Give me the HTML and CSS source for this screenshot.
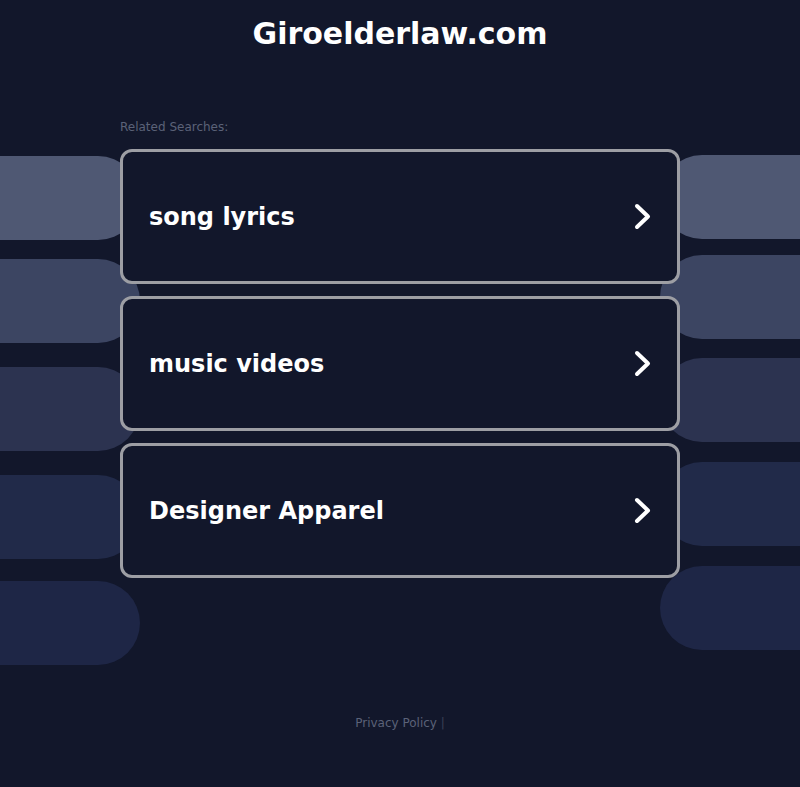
FILE: index.html
```html
<!DOCTYPE html>
<html>
<head>
<meta charset="utf-8">
<link rel="stylesheet" href="styles.css">
</head>
<body>
<div class="deco">
  <div class="pill l p1"></div><div class="pill l p2"></div><div class="pill l p3"></div><div class="pill l p4"></div><div class="pill l p5"></div>
  <div class="pill r p1 r1"></div><div class="pill r p2 r2"></div><div class="pill r p3 r3"></div><div class="pill r p4 r4"></div><div class="pill r p5 r5"></div>
</div>
<header class="header"><h1 class="title">Giroelderlaw.com</h1></header>
<main class="main">
  <div class="label">Related Searches:</div>
  <a class="card" href="#"><span class="card-text">song lyrics</span><svg class="chev" width="20" height="30" viewBox="0 0 20 30"><path d="M4 4 L15 14.5 L4 25" fill="none" stroke="#fff" stroke-width="4" stroke-linecap="round" stroke-linejoin="round"/></svg></a>
  <a class="card" href="#"><span class="card-text">music videos</span><svg class="chev" width="20" height="30" viewBox="0 0 20 30"><path d="M4 4 L15 14.5 L4 25" fill="none" stroke="#fff" stroke-width="4" stroke-linecap="round" stroke-linejoin="round"/></svg></a>
  <a class="card" href="#"><span class="card-text">Designer Apparel</span><svg class="chev" width="20" height="30" viewBox="0 0 20 30"><path d="M4 4 L15 14.5 L4 25" fill="none" stroke="#fff" stroke-width="4" stroke-linecap="round" stroke-linejoin="round"/></svg></a>
</main>
<footer class="footer"><span class="privacy">Privacy Policy</span> <span class="sep">|</span></footer>
</body>
</html>
```

FILE: styles.css
```css
html, body {
  margin: 0;
  padding: 0;
}
body {
  background: #12172b;
  font-family: "DejaVu Sans", sans-serif;
  width: 800px;
  height: 787px;
  position: relative;
  overflow: hidden;
}
.deco {
  position: absolute;
  inset: 0;
  z-index: 0;
  overflow: hidden;
}
.pill {
  position: absolute;
  height: 84px;
  width: 300px;
  border-radius: 42px;
}
.pill.l { left: -160px; }
.pill.r { left: 660px; }
.p1 { background: #4f5873; }
.p2 { background: #3c4562; }
.p3 { background: #2c3350; }
.p4 { background: #212a49; }
.p5 { background: #1e2646; }
.l.p1 { top: 156px; }
.l.p2 { top: 259px; }
.l.p3 { top: 367px; }
.l.p4 { top: 475px; }
.l.p5 { top: 581px; }
.r1 { top: 155px; }
.r2 { top: 255px; }
.r3 { top: 358px; }
.r4 { top: 462px; }
.r5 { top: 566px; }
.header {
  position: relative;
  z-index: 1;
  height: 66px;
  display: flex;
  justify-content: center;
  align-items: center;
}
.title {
  margin: 0;
  color: #ffffff;
  font-size: 30px;
  font-weight: bold;
}
.main {
  position: relative;
  z-index: 1;
  width: 560px;
  margin: 0 auto;
  padding-top: 52px;
  display: flex;
  flex-direction: column;
  gap: 12px;
}
.label {
  color: #5b6278;
  font-size: 12px;
  height: 18px;
  line-height: 18px;
  margin-bottom: 1px;
}
.card {
  box-sizing: border-box;
  height: 135px;
  border: 3px solid #9d9ea4;
  border-radius: 12px;
  background: #12172b;
  display: flex;
  align-items: center;
  justify-content: space-between;
  padding: 0 24px 0 26px;
  text-decoration: none;
}
.card-text {
  color: #ffffff;
  font-size: 24px;
  font-weight: bold;
}
.chev {
  display: block;
}
.footer {
  position: absolute;
  z-index: 1;
  left: 0;
  right: 0;
  top: 714px;
  text-align: center;
  font-size: 12px;
  line-height: 18px;
  color: #5b6278;
}
.sep { color: #3a4056; }
```
